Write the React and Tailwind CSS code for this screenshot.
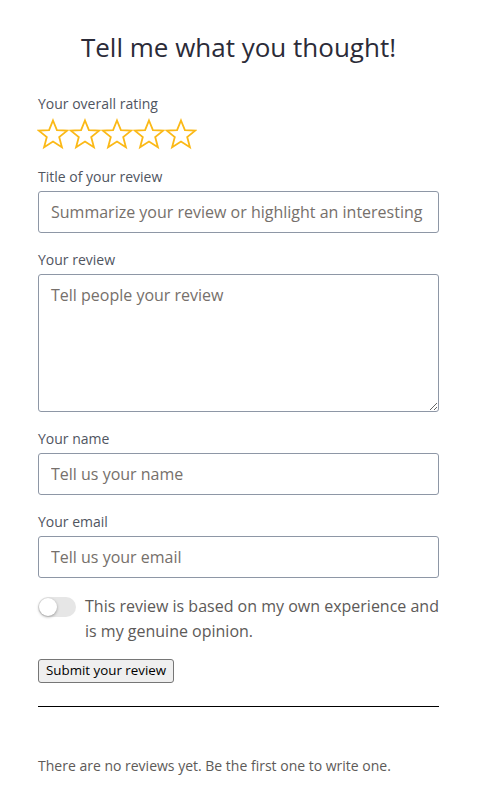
import { useState } from 'react';

const FIELD =
    'block w-full h-[42px] border border-[#8e97a6] rounded-[3px] px-[12px] text-[16px] text-[#333] placeholder:text-[#76706b] bg-white focus:outline-none';

function Star() {
    return (
        <svg width="32" height="32" viewBox="0 0 32 32" className="shrink-0">
            <polygon
                points="16,2.5 19.9,12.2 30.2,12.6 22.2,19.1 24.9,29.3 16,23.5 7.1,29.3 9.8,19.1 1.8,12.6 12.1,12.2"
                fill="none"
                stroke="#fbb917"
                strokeWidth="1.8"
                strokeLinejoin="miter"
            />
        </svg>
    );
}

function Label({ children }) {
    return <label className="block text-[14px] leading-[20px] text-[#50555f] mb-[4px]">{children}</label>;
}

export default function App() {
    const [agreed, setAgreed] = useState(false);

    return (
        <div className="min-h-screen bg-white font-['Open_Sans',sans-serif] pl-[38px] pr-[44px] pt-[29px] pb-[30px]">
            <h2 className="text-center text-[26px] leading-[36px] text-[#2b2b38]">Tell me what you thought!</h2>

            <div className="mt-[29px]">
                <Label>Your overall rating</Label>
                <div className="flex -ml-[1px]">
                    <Star />
                    <Star />
                    <Star />
                    <Star />
                    <Star />
                </div>
            </div>

            <div className="mt-[17px]">
                <Label>Title of your review</Label>
                <input className={FIELD} placeholder="Summarize your review or highlight an interesting detail" />
            </div>

            <div className="mt-[17px]">
                <Label>Your review</Label>
                <textarea
                    className="block w-full h-[138px] border border-[#8e97a6] rounded-[3px] px-[12px] py-[8px] text-[16px] leading-[25px] text-[#333] placeholder:text-[#76706b] bg-white focus:outline-none"
                    placeholder="Tell people your review"
                />
            </div>

            <div className="mt-[17px]">
                <Label>Your name</Label>
                <input className={FIELD} placeholder="Tell us your name" />
            </div>

            <div className="mt-[17px]">
                <Label>Your email</Label>
                <input className={FIELD} placeholder="Tell us your email" />
            </div>

            <div className="mt-[16px] flex items-start gap-[9px]">
                <button
                    onClick={() => setAgreed(!agreed)}
                    className={`relative mt-[3px] w-[38px] h-[20px] shrink-0 rounded-full ${agreed ? 'bg-[#fbb917]' : 'bg-[#e6e6e6]'}`}
                >
                    <span
                        className={`absolute top-[1px] ${agreed ? 'left-[19px]' : 'left-[1px]'} w-[18px] h-[18px] rounded-full bg-white shadow-[0_1px_3px_rgba(0,0,0,0.35)]`}
                    />
                </button>
                <p className="text-[16px] leading-[25px] text-[#5d5a58]">
                    This review is based on my own experience and is my genuine opinion.
                </p>
            </div>

            <button className="mt-[15px] h-[24px] px-[7px] text-[13.33px] text-black bg-[#efefef] border border-[#767676] rounded-[3px]">
                Submit your review
            </button>

            <hr className="mt-[23px] border-t border-black" />

            <p className="mt-[49px] text-[14px] leading-[20px] text-[#5d5a58]">
                There are no reviews yet. Be the first one to write one.
            </p>
        </div>
    );
}
